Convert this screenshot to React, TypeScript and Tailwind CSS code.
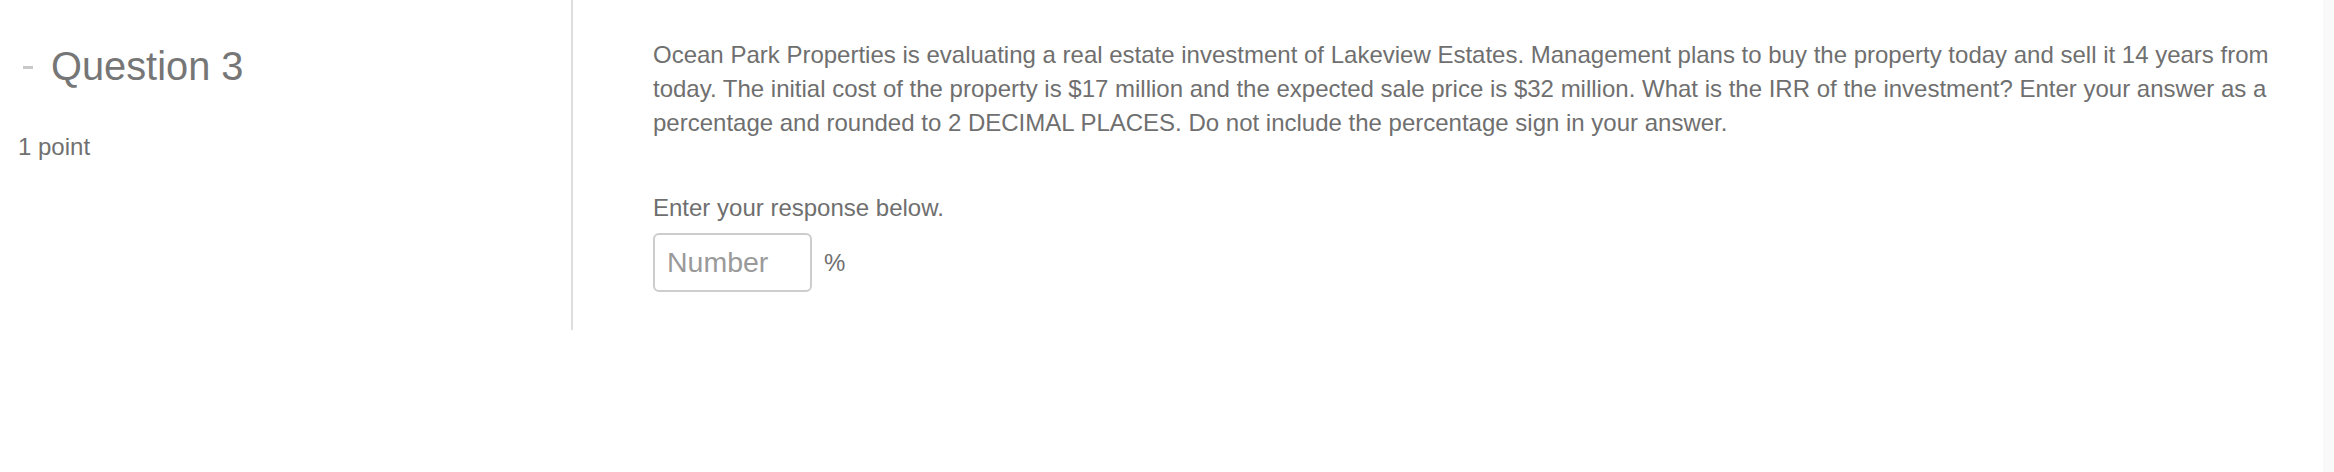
import React from "react";

export default function App() {
  return (
    <div
      className="relative w-[2334px] h-[472px] bg-white text-[#6f6f6f] overflow-hidden"
      style={{ fontFamily: '"Liberation Sans", Arial, Helvetica, sans-serif' }}
    >
      <div className="flex">
        <div className="w-[573px] shrink-0 h-[330px] border-r-2 border-[#dedede] pt-[47px]">
          <div className="flex items-center">
            <span className="ml-[23px] w-[10px] h-[3px] bg-[#c9c9c9] mt-[2px]"></span>
            <h2 className="ml-[18px] text-[39.8px] leading-[39px] text-[#767676] font-normal">
              Question 3
            </h2>
          </div>
          <div className="mt-[49px] ml-[18px] text-[24px] leading-[24px] text-[#707070]">
            1 point
          </div>
        </div>
        <div className="pl-[80px] pt-[38px] w-[1735px]">
          <p className="text-[24px] leading-[34px] w-[1640px] text-[#6f6f6f]">
            Ocean Park Properties is evaluating a real estate investment of Lakeview Estates. Management plans to buy the property today and sell it 14 years from today. The initial cost of the property is $17 million and the expected sale price is $32 million. What is the IRR of the investment? Enter your answer as a percentage and rounded to 2 DECIMAL PLACES. Do not include the percentage sign in your answer.
          </p>
          <div className="mt-[51px] text-[24px] leading-[34px] text-[#6f6f6f]">
            Enter your response below.
          </div>
          <div className="mt-[8px] flex items-center">
            <input
              type="text"
              placeholder="Number"
              className="w-[159px] h-[59px] rounded-[6px] border-2 border-[#cdcdcd] bg-white px-[12px] text-[28.5px] placeholder:text-[#9a9a9a] outline-none"
              style={{ fontFamily: '"Liberation Sans", Arial, Helvetica, sans-serif' }}
            />
            <span className="ml-[12px] text-[24px] text-[#6f6f6f]">%</span>
          </div>
        </div>
      </div>
      <div className="absolute right-0 top-0 w-[11px] h-full bg-[#f9f9f9]"></div>
    </div>
  );
}
